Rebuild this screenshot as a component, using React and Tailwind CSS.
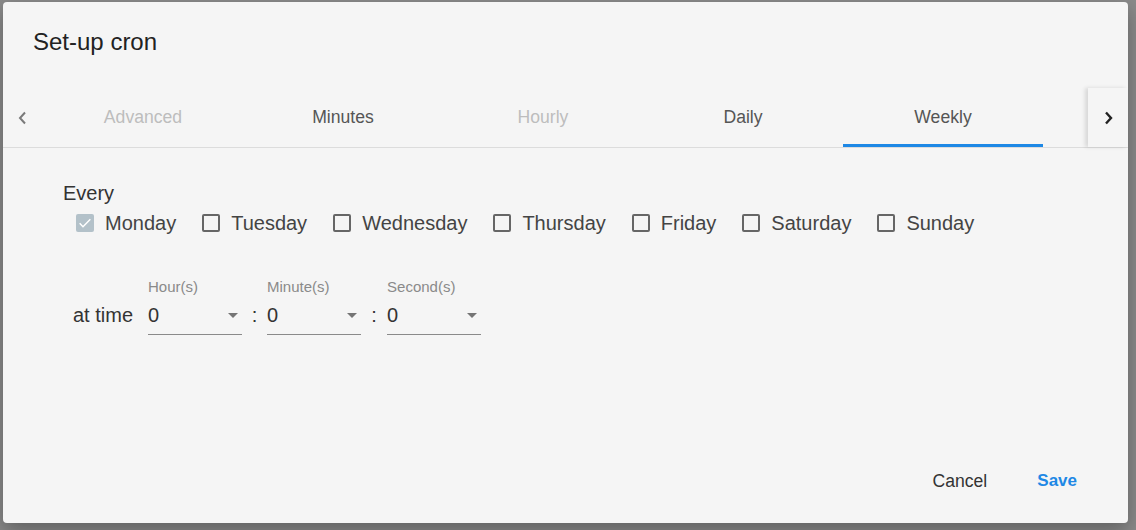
import React from "react";

const tabs = [
  { label: "Advanced", disabled: true },
  { label: "Minutes" },
  { label: "Hourly", disabled: true },
  { label: "Daily" },
  { label: "Weekly", active: true },
];

const days = ["Monday", "Tuesday", "Wednesday", "Thursday", "Friday", "Saturday", "Sunday"];

function Box({ checked }) {
  if (checked) {
    return (
      <span className="w-[18px] h-[18px] rounded-[2px] bg-[#b3c1c9] flex items-center justify-center">
        <svg width="16" height="16" viewBox="0 0 24 24">
          <path d="M4 12.5l5 5L20 6.5" fill="none" stroke="#fff" strokeWidth="2.2" />
        </svg>
      </span>
    );
  }
  return <span className="w-[18px] h-[18px] rounded-[2px] border-2 border-[#666]" />;
}

function Select({ label }) {
  return (
    <div className="w-[94px] flex flex-col">
      <span className="text-[15px] leading-[16px] text-[#8a8a8a]">{label}</span>
      <div className="mt-[9px] h-[31px] flex items-start justify-between border-b border-[#8a8a8a] pr-[2px]">
        <span className="text-[20px] leading-[22px] text-[#333]">0</span>
        <svg width="12" height="22" viewBox="0 0 12 22" className="mr-[1px]">
          <path d="M1 9h10l-5 5z" fill="#757575" />
        </svg>
      </div>
    </div>
  );
}

export default function App() {
  return (
    <div
      className="w-[1136px] h-[530px] bg-[#8a8a8a] pt-[2px] pl-[3px] overflow-hidden"
      style={{ fontFamily: "'Liberation Sans', Arial, sans-serif" }}
    >
      <div className="w-[1125px] h-[521px] rounded-[4px] bg-[#f5f5f5] flex flex-col shadow-[0_8px_20px_rgba(0,0,0,0.3)]">
        <div className="pl-[30px] pt-[26px] h-[54px] text-[24px] leading-[28px] text-[#222]">Set-up cron</div>

        <div className="mt-[32px] h-[60px] flex border-b border-[#dcdcdc]">
          <div className="w-[40px] flex items-center justify-center">
            <svg width="12" height="14" viewBox="0 0 12 14">
              <path d="M8 1.5L3 7l5 5.5" fill="none" stroke="#7a7a7a" strokeWidth="2" />
            </svg>
          </div>
          {tabs.map((t) => (
            <div
              key={t.label}
              className={
                "relative w-[200px] flex items-center justify-center text-[17.6px] " +
                (t.disabled ? "text-[#bdbdbd]" : "text-[#555]")
              }
            >
              {t.label}
              {t.active && <span className="absolute left-0 right-0 bottom-0 h-[3px] bg-[#1e88e5]" />}
            </div>
          ))}
          <div className="w-[45px]" />
          <div className="w-[40px] flex items-center justify-center shadow-[-3px_0_4px_rgba(0,0,0,0.12)]">
            <svg width="12" height="14" viewBox="0 0 12 14">
              <path d="M4 1.5L9 7l-5 5.5" fill="none" stroke="#222" strokeWidth="2.4" />
            </svg>
          </div>
        </div>

        <div className="pl-[60px] pt-[34px]">
          <div className="text-[20px] leading-[22px] text-[#333]">Every</div>
          <div className="mt-[8px] ml-[13px] flex items-center gap-[26px] h-[22px]">
            {days.map((d, i) => (
              <div key={d} className="flex items-center gap-[11px]">
                <Box checked={i === 0} />
                <span className="text-[20px] leading-[22px] text-[#444]">{d}</span>
              </div>
            ))}
          </div>

          <div className="mt-[45px] ml-[10px] flex items-start">
            <span className="mt-[25px] mr-[15px] text-[20px] leading-[22px] text-[#333]">at time</span>
            <Select label="Hour(s)" />
            <span className="mt-[25px] w-[25px] text-center text-[20px] leading-[22px] text-[#333]">:</span>
            <Select label="Minute(s)" />
            <span className="mt-[25px] w-[26px] text-center text-[20px] leading-[22px] text-[#333]">:</span>
            <Select label="Second(s)" />
          </div>
        </div>

        <div className="flex-1" />

        <div className="flex justify-end items-center pr-[35px] pb-[24px] gap-[18px]">
          <button className="h-[36px] px-[16px] text-[17.6px] text-[#333]">Cancel</button>
          <button className="h-[36px] px-[16px] text-[17px] font-bold text-[#1e88e5]">Save</button>
        </div>
      </div>
    </div>
  );
}
